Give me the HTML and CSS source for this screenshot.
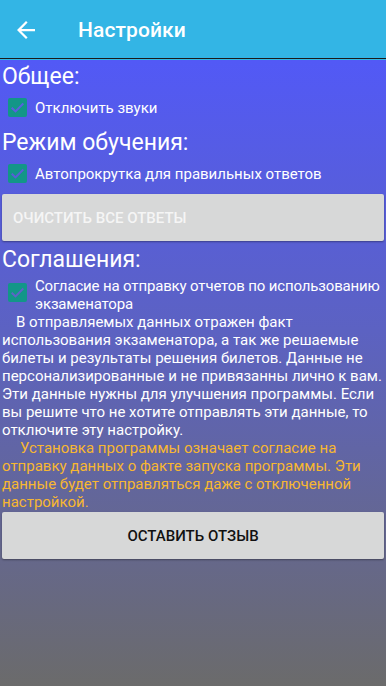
FILE: index.html
```html
<!DOCTYPE html>
<html lang="ru">
<head>
    <meta charset="UTF-8">
    <meta name="viewport" content="width=device-width, initial-scale=1.0">
    <title>Настройки</title>
    <link rel="stylesheet" href="styles.css">
</head>
<body>

    <!-- верхняя панель -->
    <header class="bar">
        <svg class="back" width="18" height="18" viewBox="4 4 16 16">
            <path d="M20 11H7.83l5.59-5.59L12 4l-8 8 8 8 1.41-1.41L7.83 13H20v-2z" fill="#fff"/>
        </svg>
        <h1>Настройки</h1>
    </header>

    <main class="content">
        <h2 class="sec sec-top">Общее:</h2>
        <label class="chk">
            <span class="box"><svg viewBox="0 0 18 18" width="19" height="19"><path d="M3.5 9.2l3.6 3.6 7.4-7.6" fill="none" stroke="#5a5fe0" stroke-width="1.8"/></svg></span>
            <span class="lbl">Отключить звуки</span>
        </label>

        <h2 class="sec">Режим обучения:</h2>
        <label class="chk">
            <span class="box"><svg viewBox="0 0 18 18" width="19" height="19"><path d="M3.5 9.2l3.6 3.6 7.4-7.6" fill="none" stroke="#585dd8" stroke-width="1.8"/></svg></span>
            <span class="lbl">Автопрокрутка для правильных ответов</span>
        </label>
        <button class="btn btn-off">ОЧИСТИТЬ ВСЕ ОТВЕТЫ</button>

        <h2 class="sec">Соглашения:</h2>
        <label class="chk chk-two">
            <span class="box"><svg viewBox="0 0 18 18" width="19" height="19"><path d="M3.5 9.2l3.6 3.6 7.4-7.6" fill="none" stroke="#5d63c8" stroke-width="1.8"/></svg></span>
            <span class="lbl">Согласие на отправку отчетов по использованию экзаменатора</span>
        </label>
        <p class="txt">В отправляемых данных отражен факт использования экзаменатора, а так же решаемые билеты и результаты решения билетов. Данные не персонализированные и не привязанны лично к вам. Эти данные нужны для улучшения программы. Если вы решите что не хотите отправлять эти данные, то отключите эту настройку.</p>
        <p class="txt warn">Установка программы означает согласие на отправку данных о факте запуска программы. Эти данные будет отправляться даже с отключенной настройкой.</p>

        <button class="btn btn-main">ОСТАВИТЬ ОТЗЫВ</button>
    </main>

</body>
</html>
```

FILE: styles.css
```css
html,body{
    margin: 0;
    padding: 0;
}
body{
    width: 386px;
    min-height: 686px;
    font-family: Roboto, "Noto Sans", sans-serif;
    color: #fff;
    background-image: linear-gradient(to bottom,#33b5e5 0,#33b5e5 60px,#5259f6 60px,#5c62c2 330px,#6b6b6b 686px);
    background-repeat: no-repeat;
    overflow: hidden;
}

/* 상단바 */
.bar{
    display: flex;
    align-items: center;
    height: 59px;
    padding-top: 2px;
    box-sizing: border-box;
    background-color: #33b5e5;
    border-bottom: 1px solid #1a1a1a;
}
.back{
    margin-left: 17px;
}
.bar h1{
    margin: 0 0 0 43px;
    font-size: 21px;
    font-weight: 500;
    letter-spacing: .1px;
}

.content{
    padding: 0 2px;
}

/* 섹션 제목 */
.sec{
    margin: 0;
    font-size: 23px;
    font-weight: 400;
    line-height: 30px;
}
.sec-top{
    margin-top: 3px;
}

/* 체크박스 행 */
.chk{
    display: flex;
    align-items: center;
    height: 31px;
    padding-left: 6px;
    margin-bottom: 5px;
}
.chk-two{
    align-items: flex-start;
    height: auto;
    margin: 2px 0 0;
}
.box{
    width: 19px;
    height: 19px;
    border-radius: 2px;
    background-color: #129688;
    flex: none;
    display: flex;
}
.chk-two .box{
    margin-top: 6px;
}
.lbl{
    margin-left: 8px;
    font-size: 15px;
    line-height: 18px;
}
.chk-two .lbl{
    letter-spacing: -.15px;
}

/* 버튼 */
.btn{
    display: block;
    width: 100%;
    height: 47px;
    border: 0;
    border-radius: 2px;
    background-color: #d7d8d8;
    box-shadow: 0 1px 2px rgba(0,0,0,.35);
    font-family: inherit;
    font-size: 15px;
    font-weight: 500;
    text-align: left;
    padding: 0 11px;
}
.btn-off{
    color: #f5f5f5;
    margin: 0 0 4px;
}
.btn-main{
    color: #111;
    text-align: center;
    margin-top: 1px;
}

/* 설명 문단 */
.txt{
    margin: 0;
    font-size: 15px;
    line-height: 18px;
    text-indent: 14px;
}
.warn{
    color: #f7b731;
    text-indent: 18px;
}
```
